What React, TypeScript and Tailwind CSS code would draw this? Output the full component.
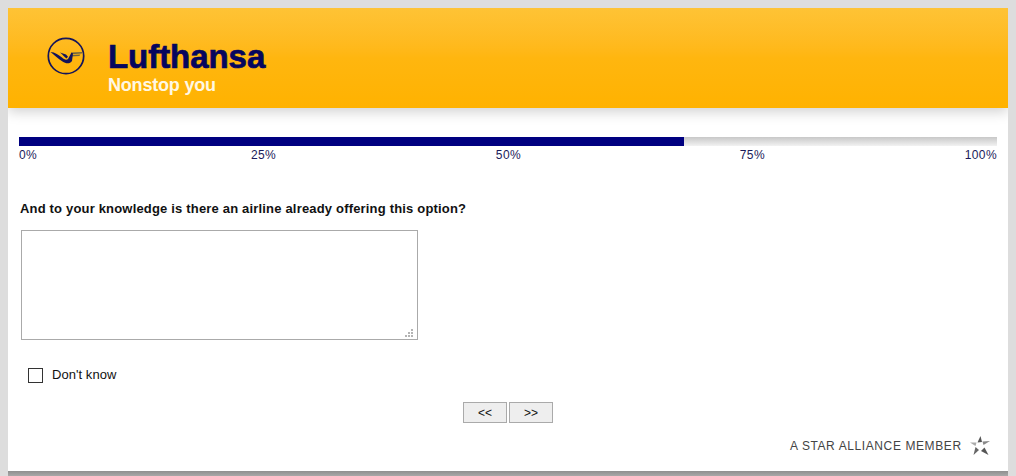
export default function App() {
  return (
    <div className="h-[476px] w-[1016px] overflow-hidden bg-[#dddddd] px-2 pt-2 font-['Liberation_Sans',Arial,sans-serif]">
      <div className="flex h-[468px] w-[1000px] flex-col overflow-hidden bg-white">
        <header className="flex h-[100px] shrink-0 items-start bg-gradient-to-b from-[#fec335] via-[#ffb60f] to-[#ffb200] pl-[38.5px] pt-[29px] shadow-[0_4px_12px_rgba(0,0,0,0.18)]">
          <svg width="38" height="38" viewBox="0 0 38 38" className="shrink-0">
            <circle cx="19" cy="19" r="17.7" fill="none" stroke="#14145a" strokeWidth="1.7" />
            <path d="M24.5 15.5 L36 15 L34.8 16.6 L24 17.3 Z" fill="#6f6440" />
            <path d="M24 18 L33.5 17.4 L32.3 19 L23.4 19.6 Z" fill="#6f6440" />
            <path d="M3.5 15 C8 15.2 12 18 15 20.6 C17 22.6 19.5 23.6 21 22 L24.5 15.5 L26 16.5 L25 24 C23 27 19 27 15.5 24.5 C11 21.5 7 18 3.5 15 Z" fill="#14145a" />
            <path d="M13 15.5 L19 17.5 L21 19.8 L19.5 21.5 C17.5 20 15.5 17.5 13 15.5 Z" fill="#14145a" />
          </svg>
          <div className="ml-[23.5px] flex flex-col">
            <span className="mt-[3px] text-[33px] font-bold leading-[34px] tracking-[-0.05px] text-[#06065e] [-webkit-text-stroke:0.7px_#06065e]">Lufthansa</span>
            <span className="mt-[1px] text-[18px] font-bold leading-[20px] tracking-[-0.2px] text-[#fff8e4]">Nonstop you</span>
          </div>
        </header>

        <div className="mx-[11px] mt-[29px] h-[9px] w-[978px] bg-gradient-to-b from-[#c8c8c8] to-[#f2f2f2]">
          <div className="h-[9px] w-[665px] bg-[#000080]" />
        </div>
        <div className="ml-[11px] mt-[2px] flex w-[978px] text-[12px] leading-[14px] tracking-[0.4px] text-[#1a1a5a]">
          <span className="w-[232px]">0%</span>
          <span className="w-[245px]">25%</span>
          <span className="w-[244px]">50%</span>
          <span className="w-[225px]">75%</span>
          <span>100%</span>
        </div>

        <p className="ml-3 mt-[39px] text-[13px] font-bold leading-[16px] tracking-[0.18px] text-[#111111]">
          And to your knowledge is there an airline already offering this option?
        </p>

        <div className="relative ml-[13px] mt-[13px] h-[110px] w-[397px] shrink-0">
          <textarea className="block h-full w-full resize-none border border-[#aaaaaa] bg-white outline-none" />
          <svg width="9" height="9" viewBox="0 0 9 9" className="absolute bottom-[2px] right-[4px]" fill="#b4b4b4">
            <rect x="6" y="0" width="2" height="2" />
            <rect x="3" y="3" width="2" height="2" />
            <rect x="6" y="3" width="2" height="2" />
            <rect x="0" y="6" width="2" height="2" />
            <rect x="3" y="6" width="2" height="2" />
            <rect x="6" y="6" width="2" height="2" />
          </svg>
        </div>

        <label className="ml-[20px] mt-[27px] flex items-center">
          <span className="h-[15px] w-[15px] border border-[#333333] bg-white" />
          <span className="ml-[9px] text-[13px] leading-[16px] tracking-[0.05px] text-[#111111]">Don't know</span>
        </label>

        <div className="ml-[455px] mt-[19px] flex gap-[2px]">
          <button className="h-[21px] w-[44px] border border-[#aaaaaa] bg-[#eeeeee] text-[12px] leading-none text-[#111111]">&lt;&lt;</button>
          <button className="h-[21px] w-[44px] border border-[#aaaaaa] bg-[#eeeeee] text-[12px] leading-none text-[#111111]">&gt;&gt;</button>
        </div>

        <div className="ml-[782px] mt-[13px] flex items-center">
          <span className="text-[12px] leading-[20px] tracking-[0.6px] text-[#444444]">A STAR ALLIANCE MEMBER</span>
          <svg width="20" height="20" viewBox="0 0 20 20" className="ml-[8px] shrink-0" fill="#555555">
            <path d="M10.5 0 L12 6 L7.5 6.5 Z" />
            <path d="M20 5 L13.5 9 L12.5 5.5 Z" opacity="0.7" />
            <path d="M0 6.5 L6.5 6.5 L5.5 10 Z" opacity="0.5" />
            <path d="M3.5 19 L5.5 11 L9 14 Z" opacity="0.9" />
            <path d="M18.5 19 L11 15 L14.5 11.5 Z" />
          </svg>
        </div>

        <div className="mt-auto h-[5px] w-full shrink-0 bg-gradient-to-b from-[#8f8f8f] to-[#a8a8a8]" />
      </div>
    </div>
  );
}
